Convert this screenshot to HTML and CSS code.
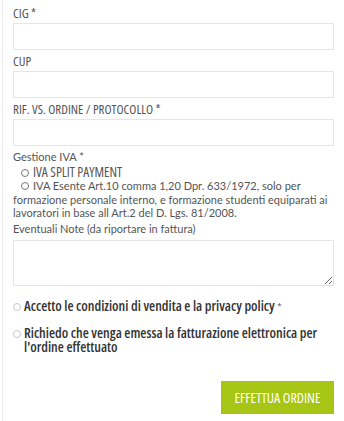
FILE: index.html
```html
<!DOCTYPE html>
<html lang="it">
<head>
<meta charset="utf-8">
<title>Ordine</title>
<link rel="stylesheet" href="styles.css">
</head>
<body>
<div class="page">
  <form class="form">
    <div class="field">
      <label class="label caps" for="cig">CIG *</label>
      <input class="input" id="cig" type="text">
    </div>
    <div class="field">
      <label class="label caps" for="cup">CUP</label>
      <input class="input" id="cup" type="text">
    </div>
    <div class="field">
      <label class="label caps" for="rif">RIF. VS. ORDINE / PROTOCOLLO *</label>
      <input class="input" id="rif" type="text">
    </div>
    <div class="field iva">
      <div class="label">Gestione IVA *</div>
      <div class="radio-line indent"><span class="radio"></span><span class="caps-opt">IVA SPLIT PAYMENT</span></div>
      <div class="radio-line indent"><span class="radio"></span>IVA Esente Art.10 comma 1,20 Dpr. 633/1972, solo per</div>
      <div class="radio-line">formazione personale interno, e formazione studenti equiparati ai<br>lavoratori in base all Art.2 del D. Lgs. 81/2008.</div>
    </div>
    <div class="field">
      <label class="label" for="note">Eventuali Note (da riportare in fattura)</label>
      <textarea class="textarea" id="note"></textarea>
    </div>
    <div class="check">
      <span class="dot"></span>
      <span class="check-text">Accetto le condizioni di vendita e la privacy policy <span class="req">*</span></span>
    </div>
    <div class="check second">
      <span class="dot"></span>
      <span class="check-text">Richiedo che venga emessa la fatturazione elettronica per<br>l'ordine effettuato</span>
    </div>
    <div class="actions">
      <button type="button" class="btn">EFFETTUA ORDINE</button>
    </div>
  </form>
</div>
</body>
</html>
```
FILE: styles.css
```css
html, body {
  margin: 0;
  padding: 0;
  background: #fff;
}
body {
  font-family: Lato, "Open Sans", sans-serif;
  color: #555;
  font-size: 11px;
}
.page {
  margin-left: 2px;
  border-left: 1px solid #ececec;
  min-height: 421px;
  box-sizing: border-box;
}
.form {
  padding: 4px 10px 0 10px;
  display: flex;
  flex-direction: column;
}
.field {
  display: flex;
  flex-direction: column;
}
.label {
  display: block;
  line-height: 18px;
  margin-bottom: 1px;
  color: #555;
}
.caps {
  font-family: "Open Sans", sans-serif;
  font-stretch: 75%;
  font-size: 13px;
}
.caps-opt {
  font-family: "Open Sans", sans-serif;
  font-stretch: 75%;
  font-size: 13.5px;
}
.input {
  height: 27px;
  box-sizing: border-box;
  border: 1px solid #e6e6e6;
  background: #fff;
  margin: 0 0 2px 0;
  padding: 0 6px;
  width: 100%;
  font: inherit;
}
.iva .label { margin-bottom: 0; }
.radio-line {
  line-height: 13.4px;
  height: 13.4px;
  color: #555;
  white-space: nowrap;
}
.radio-line:last-child { height: auto; }
.indent {
  padding-left: 8px;
  display: flex;
  align-items: center;
}
.radio {
  display: inline-block;
  width: 8px;
  height: 8px;
  border: 1px solid #777;
  border-radius: 50%;
  margin-right: 4px;
  box-sizing: border-box;
}
.textarea {
  height: 46px;
  box-sizing: border-box;
  border: 1px solid #e6e6e6;
  width: 100%;
  resize: vertical;
  font: inherit;
  margin: 1px 0 0 0;
}
.check {
  display: flex;
  align-items: flex-start;
  margin-top: 13px;
  font-family: "Open Sans", sans-serif;
  font-stretch: 75%;
  font-size: 14px;
  font-weight: 600;
  color: #333;
}
.check.second { margin-top: 12px; }
.check-text { line-height: 14px; white-space: nowrap; }
.req {
  font-weight: 400;
  font-size: 11px;
  color: #666;
}
.dot {
  flex: none;
  width: 6px;
  height: 6px;
  border: 1px solid #c8c8c8;
  border-radius: 50%;
  margin: 4px 3px 0 0;
}
.actions {
  display: flex;
  justify-content: flex-end;
  margin-top: 27px;
}
.btn {
  width: 113px;
  height: 33px;
  background: #a7c514;
  border: none;
  color: #fff;
  font-family: "Open Sans", sans-serif;
  font-stretch: 75%;
  font-size: 14px;
  padding: 0;
}
```
